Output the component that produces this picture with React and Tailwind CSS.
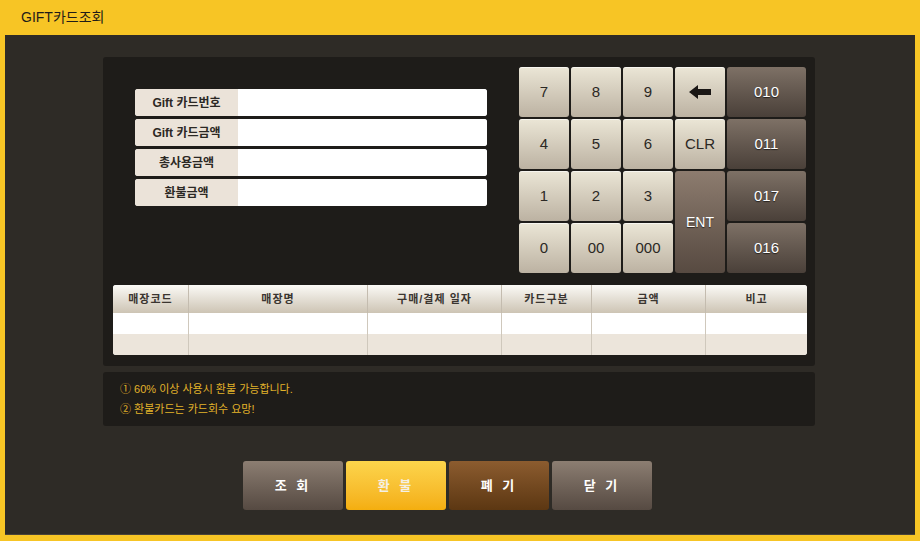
import { useState } from 'react';

const fields = ['Gift 카드번호', 'Gift 카드금액', '총사용금액', '환불금액'];

const columns = [
    { label: '매장코드', w: 'w-[75px]' },
    { label: '매장명', w: 'w-[179px]' },
    { label: '구매/결제 일자', w: 'w-[134px]' },
    { label: '카드구분', w: 'w-[90px]' },
    { label: '금액', w: 'w-[114px]' },
    { label: '비고', w: 'flex-1' },
];

const BackArrow = () => (
    <svg width="22" height="14" viewBox="0 0 22 14">
        <polygon points="0,7 9,0 9,4 22,4 22,10 9,10 9,14" fill="#1a1715" />
    </svg>
);

const LightKey = ({ children, className = '' }) => (
    <button className={`flex items-center justify-center rounded-[3px] bg-gradient-to-b from-[#ebe6d6] to-[#bcb2a2] text-[15px] text-[#2b2824] shadow-[inset_0_1px_0_rgba(255,255,255,0.6)] ${className}`}>
        {children}
    </button>
);

const DarkKey = ({ children, className = '' }) => (
    <button className={`flex items-center justify-center rounded-[3px] bg-gradient-to-b from-[#7e7166] to-[#4a4039] text-[15px] text-white [text-shadow:0_1px_1px_rgba(0,0,0,0.6)] ${className}`}>
        {children}
    </button>
);

const App = () => {
    const [values] = useState(['', '', '', '']);

    return (
        <div className="flex h-[541px] w-[920px] flex-col bg-[#f7c525] font-['Liberation_Sans','Noto_Sans_CJK_KR',sans-serif]">
            {/* Title bar */}
            <header className="flex h-[35px] items-center pl-[21px] text-[14px] text-[#1f1c18]">
                GIFT카드조회
            </header>

            {/* Body */}
            <main className="mx-[5px] flex h-[499px] flex-col bg-[#2e2b26] pl-[98px] pt-[22px] shadow-[0_1px_0_#4a4438]">
                {/* Upper panel */}
                <section className="flex h-[309px] w-[712px] flex-col rounded-[3px] bg-[#1e1c19] px-[10px] pb-[11px] pt-[10px] pr-[8px]">
                    <div className="flex">
                        <div className="mt-[22px] flex w-[374px] flex-col gap-[3px] pl-[22px]">
                            {fields.map((f, i) => (
                                <div key={f} className="flex h-[27px] overflow-hidden rounded-[3px] bg-white">
                                    <div className="flex w-[103px] items-center justify-center bg-[#ebe3d9] text-[12px] font-bold text-[#2b2824]">
                                        {f}
                                    </div>
                                    <input readOnly value={values[i]} className="flex-1 bg-white px-2 text-[12px] outline-none" />
                                </div>
                            ))}
                        </div>

                        {/* Keypad */}
                        <div className="ml-auto mr-[1px] grid grid-cols-[50px_50px_50px_50px_79px] grid-rows-[50px_50px_50px_50px] gap-[2px]">
                            <LightKey>7</LightKey>
                            <LightKey>8</LightKey>
                            <LightKey>9</LightKey>
                            <LightKey><BackArrow /></LightKey>
                            <DarkKey>010</DarkKey>
                            <LightKey>4</LightKey>
                            <LightKey>5</LightKey>
                            <LightKey>6</LightKey>
                            <LightKey className="text-[14px]">CLR</LightKey>
                            <DarkKey>011</DarkKey>
                            <LightKey>1</LightKey>
                            <LightKey>2</LightKey>
                            <LightKey>3</LightKey>
                            <button className="row-span-2 flex items-center justify-center rounded-[3px] bg-gradient-to-b from-[#8d7c6f] to-[#574a41] text-[14px] text-white [text-shadow:0_1px_1px_rgba(0,0,0,0.6)]">
                                ENT
                            </button>
                            <DarkKey>017</DarkKey>
                            <LightKey>0</LightKey>
                            <LightKey>00</LightKey>
                            <LightKey>000</LightKey>
                            <DarkKey>016</DarkKey>
                        </div>
                    </div>

                    {/* Table */}
                    <div className="mt-auto flex h-[70px] flex-col overflow-hidden rounded-[3px] bg-white">
                        <div className="flex h-[28px] bg-gradient-to-b from-[#fbfaf6] to-[#cdc4b4]">
                            {columns.map((c, i) => (
                                <div key={c.label} className={`${c.w} flex items-center justify-center text-[11px] font-bold tracking-[1px] text-[#3a3530] ${i > 0 ? 'border-l border-[#c4bcaf]' : ''}`}>
                                    {c.label}
                                </div>
                            ))}
                        </div>
                        {['bg-white', 'bg-[#ece5db]'].map((bg) => (
                            <div key={bg} className={`flex h-[21px] ${bg}`}>
                                {columns.map((c, i) => (
                                    <div key={c.label} className={`${c.w} ${i > 0 ? 'border-l border-[#cfc8bc]' : ''}`} />
                                ))}
                            </div>
                        ))}
                    </div>
                </section>

                {/* Notice */}
                <section className="mt-[6px] flex h-[54px] w-[712px] flex-col justify-center gap-[3px] rounded-[3px] bg-[#1e1c19] pl-[17px] text-[11px] text-[#e2b32a]">
                    <p>① 60% 이상 사용시 환불 가능합니다.</p>
                    <p>② 환불카드는 카드회수 요망!</p>
                </section>

                {/* Action buttons */}
                <div className="ml-[140px] mt-[35px] flex gap-[3px] text-[13px] font-bold tracking-[3px] text-white [text-shadow:0_1px_1px_rgba(0,0,0,0.5)]">
                    <button className="h-[49px] w-[100px] rounded-[3px] bg-gradient-to-b from-[#8c7e72] to-[#564a42]">조 회</button>
                    <button className="h-[49px] w-[100px] rounded-[3px] bg-gradient-to-b from-[#fcd54b] to-[#f4ae0e] text-[#f4f0e6]">환 불</button>
                    <button className="h-[49px] w-[100px] rounded-[3px] bg-gradient-to-b from-[#8c5c2f] to-[#5c3712]">폐 기</button>
                    <button className="h-[49px] w-[100px] rounded-[3px] bg-gradient-to-b from-[#8c7e72] to-[#564a42]">닫 기</button>
                </div>
            </main>
        </div>
    );
};

export default App;
